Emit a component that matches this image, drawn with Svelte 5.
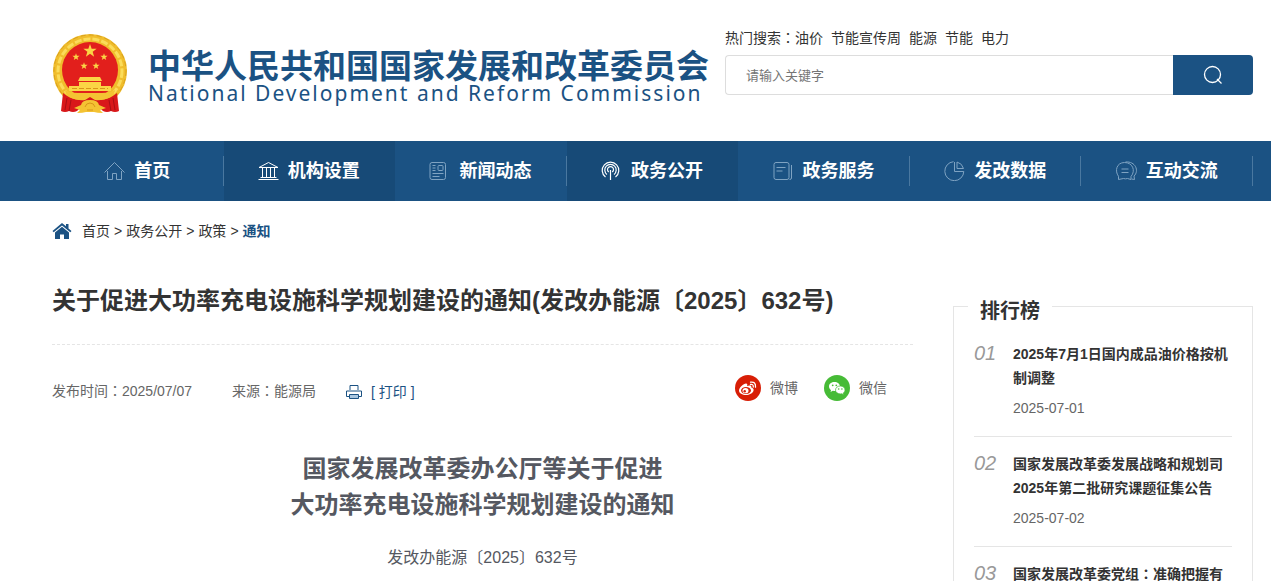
<script>
  let keyword = $state('');

  const hotWords = ['油价', '节能宣传周', '能源', '节能', '电力'];

  const nav = [
    { label: '首页', icon: 'home' },
    { label: '机构设置', icon: 'org', dark: true },
    { label: '新闻动态', icon: 'news' },
    { label: '政务公开', icon: 'open', dark: true },
    { label: '政务服务', icon: 'service' },
    { label: '发改数据', icon: 'data' },
    { label: '互动交流', icon: 'chat' },
  ];

  const crumbs = ['首页', '政务公开', '政策'];

  const ranking = [
    { title: '2025年7月1日国内成品油价格按机制调整', date: '2025-07-01' },
    { title: '国家发展改革委发展战略和规划司2025年第二批研究课题征集公告', date: '2025-07-02' },
    { title: '国家发展改革委党组：准确把握有', date: '' },
  ];

  // Five-pointed star around (cx, cy), used by the emblem.
  function star(cx, cy, r) {
    const points = [];
    for (let i = 0; i < 10; i++) {
      const radius = i % 2 ? r * 0.4 : r;
      const a = (Math.PI / 5) * i - Math.PI / 2;
      points.push(`${(cx + radius * Math.cos(a)).toFixed(2)},${(cy + radius * Math.sin(a)).toFixed(2)}`);
    }
    return points.join(' ');
  }
</script>

<!-- full-width colons are set centred in their square -->
{#snippet colons(text)}{#each text.split('：') as part, i}{#if i}<span class="colon">：</span>{/if}{part}{/each}{/snippet}

<header class="wrap head">
  <a class="logo" href="#top">
    <svg class="emblem" viewBox="0 0 76 82" aria-hidden="true">
      <circle cx="38" cy="38" r="37" fill="#f0bd2c" />
      <circle cx="38" cy="38" r="36" fill="none" stroke="#d9a11e" stroke-width="1" stroke-dasharray="5 3" />
      <circle cx="38" cy="38" r="32" fill="none" stroke="#fbdc5a" stroke-width="3" stroke-dasharray="7 2" />
      <circle cx="38" cy="37" r="28" fill="#e21f1c" />
      <g fill="#fbd545">
        <polygon points={star(38, 18, 7)} />
        <polygon points={star(24, 24, 3.8)} />
        <polygon points={star(52, 24, 3.8)} />
        <polygon points={star(32, 33, 3.8)} />
        <polygon points={star(44, 33, 3.8)} />
        <path d="M28 44h20l2 4H26zM27 49h22v4h10v5H17v-5h10z" />
      </g>
      <path d="M20 55.500h36" stroke="#d9951a" stroke-width="1" stroke-dasharray="5 2" />
      <path d="M13 57q4 3 13 3h24q9 0 13-3l-2 6-8 6H23l-8-6z" fill="#f4c333" />
      <path d="M11 60q7 6 17 7l10-4 10 4q10-1 17-7l2 18q-4 2-8 0-4 2-8 0l-5-5H30l-5 5q-4 2-8 0-4 2-8 0z" fill="#d9181a" />
      <path d="M15 65l-2 12M19 67l-2 11M61 65l2 12M57 67l2 11" stroke="#a90f14" stroke-width="1" />
      <path d="M13 58q10 5 19 5l6-3 6 3q9 0 19-5l-4 6q-9 4-16 3l-5-3-5 3q-7 1-16-3z" fill="#f4c333" />
      <path d="M22 75l7-3q1-5 9-5t9 5l7 3-6 2 3 3q-6 0-9-1h-8q-3 1-9 1l3-3z" fill="#f4c333" />
      <path d="M33 74q1-4 5-4t5 4M35 77h6" fill="none" stroke="#d9951a" />
    </svg>
    <span class="names">
      <span class="cn">中华人民共和国国家发展和改革委员会</span>
      <span class="en">National Development and Reform Commission</span>
    </span>
  </a>

  <div class="search">
    <p class="hot">
      {@render colons('热门搜索：')}{#each hotWords as word}<a href="#search">{word}</a>{/each}
    </p>
    <form onsubmit={(e) => e.preventDefault()}>
      <input type="text" bind:value={keyword} placeholder="请输入关键字" aria-label="请输入关键字" />
      <button type="submit" aria-label="搜索">
        <svg viewBox="0 0 20 20" width="20" height="20" fill="none" stroke="#fff" stroke-width="1.3">
          <circle cx="9.5" cy="9.5" r="8" />
          <path d="M14 14l4.5 4.5" />
        </svg>
      </button>
    </form>
  </div>
</header>

<nav>
  <ul class="wrap">
    {#each nav as item}
      <li class:dark={item.dark}>
        <a href="#{item.icon}">
          <svg viewBox="0 0 21 20" width="21" height="20" fill="none" stroke="currentColor" aria-hidden="true">
            {#if item.icon === 'home'}
              <path d="M.500 11.500L10.500 1.500l10 10M3.500 10v8.500h5v-6h4v6h5V10" />
            {:else if item.icon === 'org'}
              <path d="M.500 18.500h20M2.500 16.500h16M1 6.500h19L10.500 1.500zM4.500 7v9M8.500 7v9M12.500 7v9M16.500 7v9" />
            {:else if item.icon === 'news'}
              <rect x="1" y="1.500" width="15.500" height="17" rx="2" />
              <rect x="9" y="4.500" width="5" height="5" rx="1" />
              <path d="M3.500 4.500h3M3.500 7h3M3.500 9.500h3M3.500 12.500h11M3.500 15.500h7" />
            {:else if item.icon === 'open'}
              <path d="M4.500 16a8.300 8.300 0 1 1 10 0M6 13.500a5.700 5.700 0 1 1 7 0M7.800 11a3 3 0 1 1 3.400 0M9.500 9v10" stroke-width="1.2" />
            {:else if item.icon === 'service'}
              <rect x="1" y="1.500" width="15" height="17" rx="2" />
              <path d="M3.500 6.500h9M3.500 10h6M18.500 4v13q0 1.500-2 1.500" />
            {:else if item.icon === 'data'}
              <path d="M9.500.700a9.500 9.500 0 1 0 10.300 9.800H10.500V1" />
              <path d="M13 1v6.500h6.500A9 9 0 0 0 13 1z" />
            {:else}
              <path d="M2.500 18.500v-3.200C-1.500 10 .500 1.500 8.500 1.500s11.500 8 6.500 14v3L11.500 17.500q-2 .7-4 0z" />
              <path d="M5.500 8h7M5.500 11.500h7M9.500 1c10-1 14 9 8.500 14l.5 3.500-3-.5" />
            {/if}
          </svg>
          {item.label}
        </a>
      </li>
    {/each}
  </ul>
</nav>

<div class="wrap">
  <div class="crumbs">
    <svg viewBox="0 0 20 18" width="20" height="18" fill="#1b5283" aria-hidden="true">
      <path d="M10 1L.500 9l1.200 1.300L10 3.500l8.300 6.800L19.500 9l-3-2.600V2H14v2.300z" />
      <path d="M3 10.500l7-5.800 7 5.800V17h-5v-4.500H8V17H3z" />
    </svg>
    {#each crumbs as crumb}<a href="#crumb">{crumb}</a>&gt;{/each}<a class="here" href="#here">通知</a>
  </div>

  <div class="columns">
    <main>
      <h1>关于促进大功率充电设施科学规划建设的通知(发改办能源〔2025〕632号)</h1>

      <div class="meta">
        <span>{@render colons('发布时间：2025/07/07')}</span>
        <span class="source">{@render colons('来源：能源局')}</span>
        <button class="print" type="button">
          <svg viewBox="0 0 16 16" width="16" height="16" fill="none" stroke="currentColor" aria-hidden="true">
            <path d="M4 6V1.500h8V6M3.500 12.500h-3v-5.500h15v5.500h-3" />
            <path d="M3.500 10.500h9v4h-9z" fill="#a9c6df" />
          </svg>
          [ 打印 ]
        </button>
        <div class="share">
          <a href="#weibo">
            <svg viewBox="0 0 26 26" width="26" height="26" aria-hidden="true">
              <circle cx="13" cy="13" r="13" fill="#d81e06" />
              <path d="M11 8.500c1.500 0 1.500 1.200 1 2.500 2-1 5-1 4.300 1.500 1.800.5 2.700 1.600 2.200 3.200-.8 2.600-4 4.300-7.500 4.300S4 18.300 4 15.500 8.500 8.500 11 8.500z" fill="#fff" />
              <ellipse cx="11" cy="15.500" rx="5" ry="3.500" fill="#d81e06" />
              <ellipse cx="10.500" cy="15.700" rx="3" ry="2.600" fill="#fff" />
              <circle cx="9.700" cy="16.200" r="1.200" fill="#d81e06" />
              <path d="M15.500 7.200q5.500-.8 5 5M15.500 9.500q3-.5 2.800 2.500" fill="none" stroke="#fff" stroke-width="1.300" stroke-linecap="round" />
            </svg>
            微博
          </a>
          <a href="#wechat">
            <svg viewBox="0 0 26 26" width="26" height="26" aria-hidden="true">
              <circle cx="13" cy="13" r="13" fill="#46bb36" />
              <path d="M5 11.500C5 8.700 7.500 7 10.500 7s5.500 1.800 5.500 4.500S13.500 16 10.500 16l-1.700-.2L6.500 17l.6-1.900C5.800 14.300 5 13 5 11.500z" fill="#fff" />
              <path d="M11.500 15c0-2.400 2.200-4 4.800-4s4.700 1.600 4.700 4c0 1.300-.7 2.300-1.700 3l.4 1.700-2-1-1.400.2c-2.600 0-4.800-1.600-4.800-3.900z" fill="#fff" stroke="#46bb36" stroke-width=".7" />
              <g fill="#46bb36">
                <circle cx="8.700" cy="10.300" r=".9" /><circle cx="12.300" cy="10.300" r=".9" />
                <circle cx="14.700" cy="14" r=".8" /><circle cx="17.900" cy="14" r=".8" />
              </g>
            </svg>
            微信
          </a>
        </div>
      </div>

      <article>
        <h2>国家发展改革委办公厅等关于促进<br />大功率充电设施科学规划建设的通知</h2>
        <p>发改办能源〔2025〕632号</p>
      </article>
    </main>

    <aside>
      <h3>排行榜</h3>
      <ol>
        {#each ranking as item, i}
          <li>
            <em>0{i + 1}</em>
            <div>
              <a href="#rank-{i + 1}">{@render colons(item.title)}</a>
              {#if item.date}<time>{item.date}</time>{/if}
            </div>
          </li>
        {/each}
      </ol>
    </aside>
  </div>
</div>

<style>
  :global(body) {
    margin: 0;
    background: #fff;
    color: #333;
    font: 14px/24px 'Liberation Sans', 'Noto Sans CJK SC', sans-serif;
  }

  :global(html) { scrollbar-width: none; }

  a {
    color: inherit;
    text-decoration: none;
  }

  ul, ol, p, h1, h2, h3 {
    margin: 0;
    padding: 0;
    list-style: none;
  }

  svg { flex: none; }

  .colon { font-family: 'Noto Sans CJK TC', sans-serif; line-height: 1; }

  .wrap { padding: 0 18px 0 52px; }

  /* header */
  .head {
    display: flex;
    gap: 16px;
    padding-top: 26px;
    padding-bottom: 26px;
  }

  .logo {
    display: flex;
    gap: 20px;
    color: #1b5283;
    padding-top: 7px;
    white-space: nowrap;
  }
  .emblem {
    width: 76px;
    height: 82px;
  }
  .names {
    display: flex;
    flex-direction: column;
    padding-top: 18px;
  }
  .cn {
    font-size: 33px;
    line-height: 32px;
    font-weight: 700;
  }
  .en {
    font: 21px/20px 'Noto Sans', sans-serif;
    letter-spacing: 2px;
  }

  .search { flex: 1; }
  .hot { padding-bottom: 5px; }
  .hot a { margin-right: 8px; }

  form { display: flex; }
  input {
    flex: 1;
    min-width: 0;
    height: 40px;
    box-sizing: border-box;
    border: 1px solid #ddd;
    border-right: 0;
    border-radius: 4px 0 0 4px;
    padding: 0 20px;
    font: inherit;
    font-size: 13px;
    outline: none;
  }
  input::placeholder { color: #757575; }
  form button {
    width: 80px;
    height: 40px;
    border: 0;
    border-radius: 0 4px 4px 0;
    background: #1b5283;
    display: flex;
    align-items: center;
    justify-content: center;
    cursor: pointer;
  }

  /* main menu */
  nav { background: #1b5283; }
  nav ul { display: flex; }
  nav li {
    flex: 1;
    display: flex;
    align-items: center;
    height: 60px;
  }
  nav li a {
    flex: 1;
    display: flex;
    align-items: center;
    justify-content: center;
    gap: 9px;
    height: 30px;
    border-right: 1px solid #4a78a0;
    color: #fff;
    font-size: 18px;
    font-weight: 700;
    white-space: nowrap;
  }
  nav svg { color: #7fa3c2; }
  nav .dark { background: #174a77; }
  nav .dark a { border-color: transparent; }
  nav .dark svg { color: #fff; }

  .crumbs {
    display: flex;
    align-items: center;
    gap: 4px;
    padding-top: 18px;
  }
  .crumbs svg { margin-right: 6px; }
  .here {
    color: #1b5283;
    font-weight: 700;
  }

  .columns {
    display: flex;
    gap: 40px;
  }

  /* article */
  main {
    flex: 1;
    min-width: 0;
    padding-top: 40px;
  }
  h1 {
    font-size: 24px;
    line-height: 36px;
    padding-bottom: 25px;
    border-bottom: 1px dashed #e5e5e5;
  }
  .meta {
    display: flex;
    align-items: center;
    padding-top: 30px;
    color: #666;
  }
  .meta > span { margin-right: 40px; }
  .meta > .source { margin-right: 30px; }
  .print {
    display: flex;
    align-items: center;
    gap: 9px;
    border: 0;
    padding: 2px 0 0;
    background: none;
    color: #1b5283;
    font: inherit;
    cursor: pointer;
  }
  .share {
    display: flex;
    gap: 26px;
    margin-left: auto;
    padding: 0 26px 6px 0;
  }
  .share a {
    display: flex;
    align-items: center;
    gap: 9px;
  }

  article {
    padding-top: 44px;
    text-align: center;
    color: #555861;
  }
  h2 {
    font-size: 24px;
    line-height: 36px;
  }
  article p {
    font-size: 16px;
    line-height: 30px;
    padding: 20px 0 40px;
  }

  /* ranking */
  aside {
    width: 300px;
    box-sizing: border-box;
    margin-top: 63px;
    border: 1px solid #e5e5e5;
    padding: 0 20px;
  }
  h3 {
    width: fit-content;
    margin: -11px 0 0 -6px;
    padding: 0 12px;
    background: #fff;
    font-size: 20px;
    line-height: 30px;
  }
  ol li {
    display: flex;
    padding: 15px 0 16px;
    border-bottom: 1px solid #e5e5e5;
  }
  ol li:first-child { padding-top: 16px; }
  em {
    width: 39px;
    flex: none;
    color: #999;
    font-size: 20px;
    line-height: 22px;
  }
  ol a {
    font-weight: 700;
  }
  time {
    display: block;
    padding-top: 6px;
    color: #666;
  }
</style>
